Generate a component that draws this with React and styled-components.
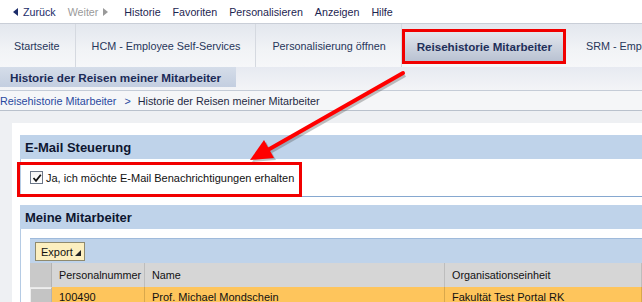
import React from 'react';
import styled, { createGlobalStyle } from 'styled-components';

const GlobalStyle = createGlobalStyle`
  html, body {
    margin: 0;
    padding: 0;
    overflow: hidden;
  }
  body {
    font-family: "Liberation Sans", Arial, sans-serif;
    font-size: 11px;
    color: #1b2a48;
  }
`;

const menuItems = ['Historie', 'Favoriten', 'Personalisieren', 'Anzeigen', 'Hilfe'];
const tabs = ['Startseite', 'HCM - Employee Self-Services', 'Personalisierung öffnen'];

export default function App() {
  return (
    <Page>
      <GlobalStyle />
      <MenuBar>
        <NavLink>
          <Triangle dir="left" />Zurück
        </NavLink>
        <NavLink disabled>
          Weiter<Triangle dir="right" />
        </NavLink>
        {menuItems.map((m) => (
          <MenuItem key={m}>{m}</MenuItem>
        ))}
      </MenuBar>

      <TabBar>
        {tabs.map((t) => (
          <Tab key={t}>{t}</Tab>
        ))}
        <ActiveTab>Reisehistorie Mitarbeiter</ActiveTab>
        <Tab last>SRM - Employee Self-Services</Tab>
      </TabBar>

      <SubBar>
        <SubTab>Historie der Reisen meiner Mitarbeiter</SubTab>
      </SubBar>

      <Breadcrumb>
        <Crumb link>Reisehistorie Mitarbeiter</Crumb>
        <CrumbSep>&gt;</CrumbSep>
        <Crumb>Historie der Reisen meiner Mitarbeiter</Crumb>
      </Breadcrumb>

      <Content>
        <Panel>
          <SectionHeader>E-Mail Steuerung</SectionHeader>
          <SectionBody>
            <CheckRow>
              <CheckBox>
                <svg width="10" height="10" viewBox="0 0 10 10">
                  <path d="M1.5 5 L4 7.8 L8.8 1.8" fill="none" stroke="#111" strokeWidth="1.8" />
                </svg>
              </CheckBox>
              Ja, ich möchte E-Mail Benachrichtigungen erhalten
            </CheckRow>
          </SectionBody>

          <SectionGap />

          <SectionHeader>Meine Mitarbeiter</SectionHeader>
          <TableSection>
            <Toolbar>
              <ExportButton>
                Export
                <svg width="6" height="6" viewBox="0 0 6 6">
                  <path d="M0 6 L6 6 L6 0 Z" fill="#222" />
                </svg>
              </ExportButton>
            </Toolbar>
            <Table>
              <SelectorCell header />
              <HeadCell>Personalnummer</HeadCell>
              <HeadCell>Name</HeadCell>
              <HeadCell>Organisationseinheit</HeadCell>
              <SelectorCell />
              <DataCell>100490</DataCell>
              <DataCell>Prof. Michael Mondschein</DataCell>
              <DataCell>Fakultät Test Portal RK</DataCell>
            </Table>
          </TableSection>
        </Panel>
      </Content>

      <HighlightBox style={{ left: 17, top: 162, width: 285, height: 35 }} />
      <Arrow width="642" height="302" viewBox="0 0 642 302">
        <g transform="translate(2 2)" opacity="0.35">
          <line x1="403" y1="73" x2="266" y2="151" stroke="#555" strokeWidth="4" />
          <polygon points="250,160 264,140 274,158" fill="#555" />
        </g>
        <line x1="403" y1="73" x2="266" y2="151" stroke="#ff0000" strokeWidth="4" strokeLinecap="round" />
        <polygon points="250,160 264,140 274,158" fill="#ff0000" />
      </Arrow>
    </Page>
  );
}

function Triangle({ dir }) {
  return (
    <TriangleIcon width="5" height="8" viewBox="0 0 5 8" dir={dir}>
      {dir === 'left' ? <path d="M5 0 L0 4 L5 8 Z" /> : <path d="M0 0 L5 4 L0 8 Z" />}
    </TriangleIcon>
  );
}

const Page = styled.div`
  position: relative;
  width: 642px;
  height: 302px;
  overflow: hidden;
  background: #eef0f3;
`;

const MenuBar = styled.div`
  height: 23px;
  display: flex;
  align-items: center;
  padding-left: 13px;
  gap: 12px;
  background: #fff;
  border-bottom: 1px solid #c9ced7;
  font-size: 10.7px;
`;

const NavLink = styled.span`
  display: flex;
  align-items: center;
  gap: 4px;
  color: ${(p) => (p.disabled ? '#9a9a9a' : '#1c2c6a')};
  fill: ${(p) => (p.disabled ? '#9a9a9a' : '#1c2c6a')};
  margin-right: ${(p) => (p.disabled ? '4px' : '0')};
`;

const TriangleIcon = styled.svg`
  display: block;
  margin: ${(p) => (p.dir === 'left' ? '0 1px 0 0' : '0 0 0 1px')};
`;

const MenuItem = styled.span`
  color: #1c2550;
`;

const TabBar = styled.div`
  height: 43px;
  display: flex;
  align-items: stretch;
  background: linear-gradient(#e3e7ee, #f1f3f6 60%, #f6f7f9);
  white-space: nowrap;
`;

const Tab = styled.div`
  display: flex;
  align-items: center;
  padding: 0 15px 0 ${(p) => (p.last ? '20px' : '16px')};
  border-right: ${(p) => (p.last ? 'none' : '1px solid #d5d9e0')};
  color: #27365a;
  font-size: 10.8px;
  &:first-child {
    padding-left: 14px;
  }
`;

const ActiveTab = styled.div`
  display: flex;
  align-items: center;
  margin: 5px 0 3px 0;
  padding: 0 11px 0 12px;
  border: 3px solid #f10000;
  background: linear-gradient(#e4e7ee, #cbd2de 55%, #b9c2d2);
  color: #1f2f5a;
  font-weight: bold;
  font-size: 11.6px;
`;

const SubBar = styled.div`
  height: 23px;
  background: linear-gradient(#e7eaf1, #f3f4f7);
  border-bottom: 1px solid #c5ccd7;
`;

const SubTab = styled.div`
  width: 226px;
  height: 20px;
  display: flex;
  align-items: center;
  padding-left: 10px;
  background: linear-gradient(#d5dde9, #c3cee0);
  color: #1b2b57;
  font-weight: bold;
  font-size: 11.7px;
`;

const Breadcrumb = styled.div`
  height: 19px;
  display: flex;
  align-items: center;
  background: #f5f6f8;
  border-bottom: 1px solid #b9c1cc;
  font-size: 10.8px;
`;

const Crumb = styled.span`
  color: ${(p) => (p.link ? '#2a49a0' : '#1f2a44')};
`;

const CrumbSep = styled.span`
  margin: 0 7px 0 8px;
  color: #2a49a0;
`;

const Content = styled.div`
  padding: 12px 0 0 12px;
  background: #eef0f3;
  height: 191px;
`;

const Panel = styled.div`
  background: #fff;
  height: 100%;
  padding: 12px 0 0 8px;
`;

const SectionHeader = styled.div`
  height: 24px;
  display: flex;
  align-items: center;
  padding-left: 5px;
  background: #bfd3ea;
  color: #0d1630;
  font-weight: bold;
  font-size: 13px;
`;

const SectionBody = styled.div`
  border-left: 1px solid #b5cbe4;
  border-bottom: 1px solid #86a8d0;
`;

const CheckRow = styled.div`
  height: 37px;
  display: flex;
  align-items: center;
  gap: 3px;
  padding-left: 9px;
  color: #111;
  font-size: 11px;
`;

const CheckBox = styled.span`
  width: 11px;
  height: 11px;
  display: flex;
  align-items: center;
  justify-content: center;
  border: 1px solid #6b7688;
  background: linear-gradient(#f4f4f4, #fff);
`;

const SectionGap = styled.div`
  height: 8px;
`;

const TableSection = styled.div`
  border-left: 1px solid #b5cbe4;
  padding: 9px 0 0 9px;
`;

const Toolbar = styled.div`
  height: 24px;
  display: flex;
  align-items: center;
  padding-left: 5px;
  background: #bfd3ea;
  border-top: 1px solid #9fbadb;
`;

const ExportButton = styled.div`
  height: 16px;
  display: flex;
  align-items: flex-end;
  gap: 2px;
  padding: 0 3px 1px 5px;
  background: #fcefc0;
  border: 1px solid #8f8a6e;
  color: #111;
  font-size: 11px;
  line-height: 13px;
  svg {
    margin-bottom: 3px;
  }
`;

const Table = styled.div`
  display: grid;
  grid-template-columns: 22px 93px 300px 1fr;
  grid-template-rows: 24px 24px;
`;

const SelectorCell = styled.div`
  background: ${(p) => (p.header ? '#c9c9c9' : '#c4c4c4')};
  border-right: 1px solid #b3b3b3;
  border-top: ${(p) => (p.header ? 'none' : '1px solid #e8e8e8')};
  box-shadow: ${(p) => (p.header ? 'none' : 'inset 1px 1px 0 #eee')};
`;

const HeadCell = styled.div`
  display: flex;
  align-items: center;
  padding-left: 7px;
  background: #d6d6d6;
  border-right: 1px solid #bdbdbd;
  color: #111;
  font-size: 10.8px;
  white-space: nowrap;
  overflow: hidden;
`;

const DataCell = styled.div`
  display: flex;
  align-items: flex-start;
  padding: 4px 0 0 7px;
  background: #fec55c;
  border-right: 1px solid #d9a84c;
  color: #111;
  font-size: 11px;
`;

const HighlightBox = styled.div`
  position: absolute;
  box-sizing: border-box;
  border: 3px solid #f10000;
  pointer-events: none;
`;

const Arrow = styled.svg`
  position: absolute;
  left: 0;
  top: 0;
  pointer-events: none;
`;
